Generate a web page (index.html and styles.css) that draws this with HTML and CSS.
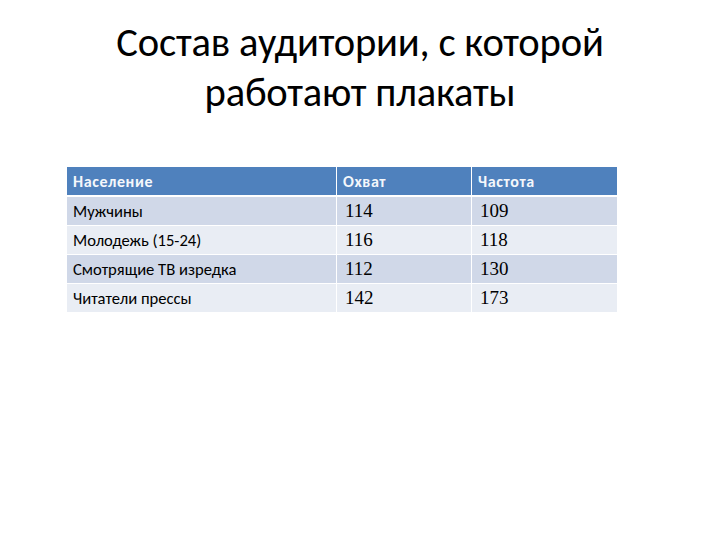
FILE: index.html
```html
<!DOCTYPE html>
<html lang="ru">
<head>
<meta charset="utf-8">
<link rel="stylesheet" href="styles.css">
</head>
<body>
<div class="slide">
  <h1 class="title">Состав аудитории, с которой<br>работают плакаты</h1>
  <table class="data">
    <thead>
      <tr><th class="c1">Население</th><th class="c2">Охват</th><th class="c3">Частота</th></tr>
    </thead>
    <tbody>
      <tr class="odd"><td>Мужчины</td><td class="num">114</td><td class="num">109</td></tr>
      <tr class="even"><td>Молодежь (15-24)</td><td class="num">116</td><td class="num">118</td></tr>
      <tr class="odd"><td>Смотрящие ТВ изредка</td><td class="num">112</td><td class="num">130</td></tr>
      <tr class="even"><td>Читатели прессы</td><td class="num">142</td><td class="num">173</td></tr>
    </tbody>
  </table>
</div>
</body>
</html>
```
FILE: styles.css
```css
html, body {
  margin: 0;
  padding: 0;
  background: #ffffff;
}
.slide {
  width: 720px;
  height: 540px;
  display: flex;
  flex-direction: column;
  align-items: flex-start;
  font-family: Carlito, Lato, "Noto Sans", sans-serif;
  color: #000;
}
.title {
  align-self: stretch;
  margin: 17px 0 0 0;
  font-weight: normal;
  font-size: 40.6px;
  line-height: 50px;
  text-align: center;
  letter-spacing: -0.2px;
}
.data {
  margin: 49px 0 0 66px;
  border-collapse: collapse;
  font-size: 16.6px;
}
.data th, .data td {
  height: 28px;
  padding: 0 6px;
  border: 1px solid #ffffff;
  text-align: left;
  vertical-align: middle;
}
.data th {
  background: #4f81bd;
  color: #f4f7fb;
  font-weight: bold;
  font-size: 16px;
  letter-spacing: 0.6px;
  border-bottom: 2px solid #ffffff;
}
.c1 { width: 257px; }
.c2 { width: 122px; }
.c3 { width: 133px; }
.odd td { background: #d0d8e8; }
.even td { background: #e9edf4; }
.num {
  font-family: "Liberation Serif", serif;
  font-size: 19px;
}
.data td.num { padding-left: 8px; }
```
